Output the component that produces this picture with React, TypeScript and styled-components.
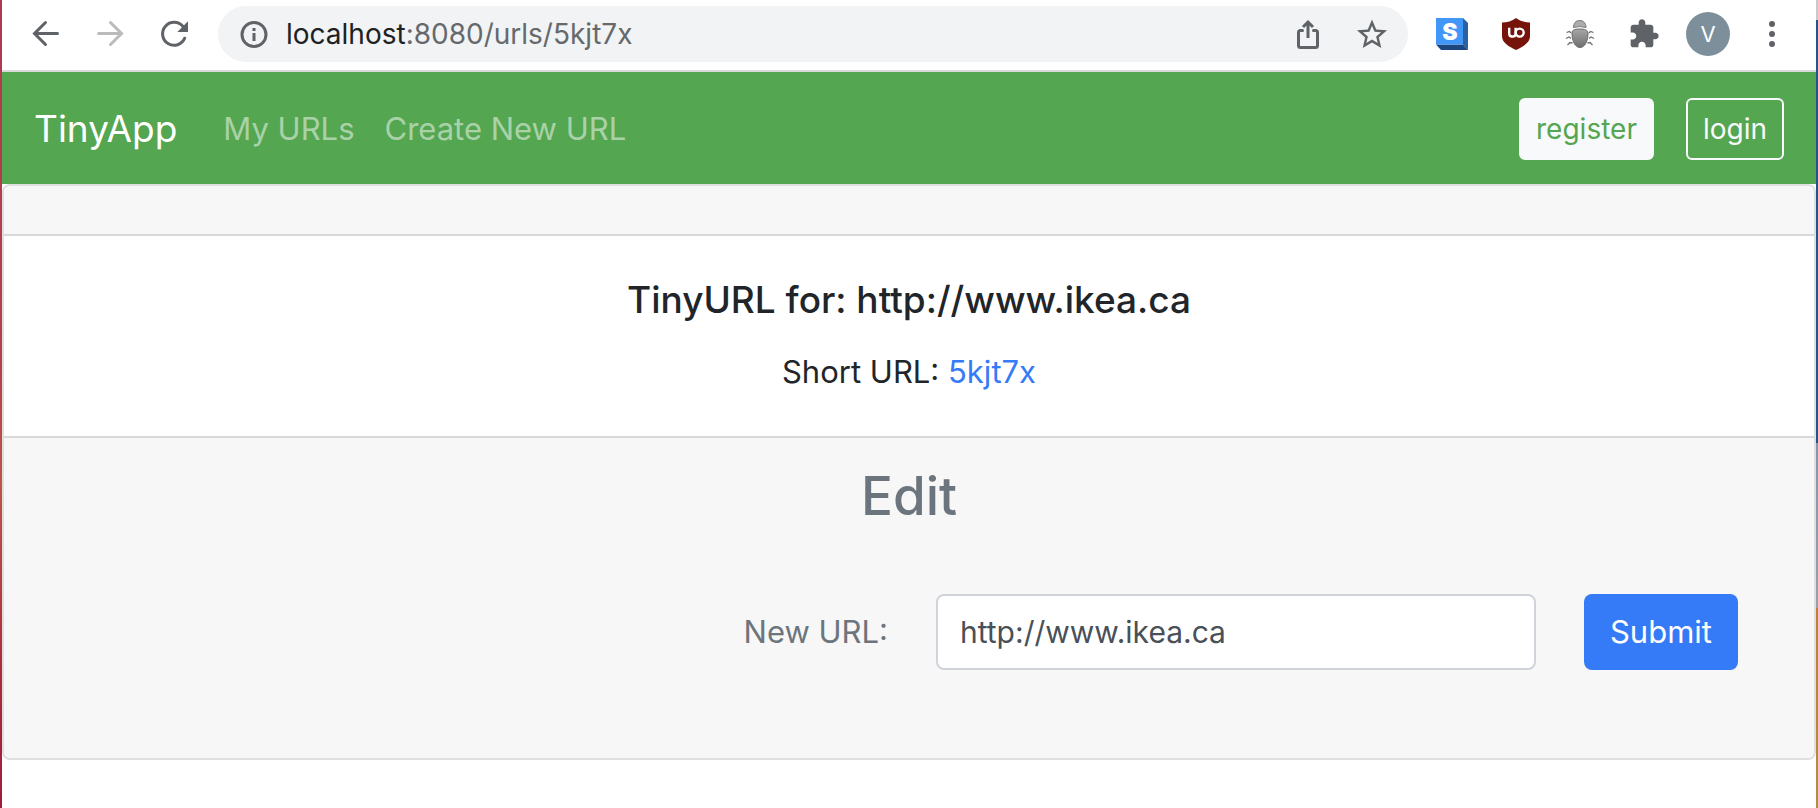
import React from 'react';
import styled, { createGlobalStyle } from 'styled-components';

const GlobalStyle = createGlobalStyle`
  *, *::before, *::after {
    box-sizing: border-box;
  }
  body {
    margin: 0;
    background: #ffffff;
    color: #212529;
    font-family: Inter, "Liberation Sans", sans-serif;
    font-size: 31px;
    line-height: 48px;
  }
`;

const Desktop = styled.div`
  display: grid;
  grid-template-columns: 2px minmax(0, 1fr) 2px;
  min-height: 100vh;
`;

const LeftEdge = styled.div`
  background: linear-gradient(#ad3a52, #b5404c 45%, #bd5548 60%, #b02c3c 82%, #a01c3c);
`;

const RightEdge = styled.div`
  background: linear-gradient(
    #c9c9cb 0 20px,
    #275487 20px 443px,
    #8496ae 443px,
    #9aa0a6 608px,
    #b9803f 608px,
    #b38c45 100%
  );
`;

const Window = styled.div`
  background: #ffffff;
`;

/* Browser toolbar */

const Toolbar = styled.header`
  display: flex;
  align-items: center;
  gap: 28px;
  padding: 6px 28px 8px;
  border-bottom: 2px solid #dadadd;
`;

const IconGroup = styled.div`
  display: flex;
  align-items: center;
  gap: 32px;
`;

const IconButton = styled.button<{ $faded?: boolean }>`
  display: block;
  width: 32px;
  height: 32px;
  padding: 0;
  border: 0;
  background: none;
  color: ${(p) => (p.$faded ? '#babbbd' : '#5f6368')};

  svg {
    display: block;
    width: 32px;
    height: 32px;
  }
`;

const AddressBar = styled.div`
  display: flex;
  flex: 1;
  align-items: center;
  gap: 32px;
  height: 56px;
  padding: 0 20px;
  border-radius: 28px;
  background: #f1f3f4;
`;

const Address = styled.div`
  display: flex;
  flex: 1;
  align-items: center;
  gap: 16px;
  color: #66696c;
  font-size: 28px;
`;

const Host = styled.span`
  color: #202124;
`;

const ProfileButton = styled.button`
  width: 44px;
  height: 44px;
  margin: 0 -6px;
  padding: 0;
  border: 0;
  border-radius: 50%;
  background: #7c8f9b;
  color: #ffffff;
  font: 400 22px/44px Inter, "Liberation Sans", sans-serif;
`;

/* Page */

const Navbar = styled.nav`
  display: flex;
  align-items: center;
  justify-content: space-between;
  padding: 26px 32px 24px;
  background: #54a651;
`;

const NavLinks = styled.div`
  display: flex;
  align-items: center;
  gap: 30px;
`;

const NavActions = styled.div`
  display: flex;
  align-items: center;
  gap: 32px;
`;

const Brand = styled.a`
  margin-right: 16px;
  color: #ffffff;
  font-size: 37px;
  text-decoration: none;
`;

const NavLink = styled.a`
  color: rgba(255, 255, 255, 0.5);
  text-decoration: none;
`;

const NavButton = styled.a<{ $filled?: boolean }>`
  padding: 8px 15px;
  border: 2px solid #f8f9fa;
  border-radius: 6px;
  background: ${(p) => (p.$filled ? '#f8f9fa' : 'transparent')};
  color: ${(p) => (p.$filled ? '#54a651' : '#f8f9fa')};
  font-size: 28px;
  line-height: 42px;
  text-decoration: none;
`;

const Card = styled.main`
  border: 2px solid #dfdfdf;
  border-radius: 8px;
  background: #ffffff;
  text-align: center;
`;

const CardHeader = styled.div`
  height: 50px;
  border-bottom: 2px solid #d8d8d8;
  border-radius: 6px 6px 0 0;
  background: #f7f7f7;
`;

const CardBody = styled.section`
  padding: 40px;
`;

const Title = styled.h1`
  margin: 0 0 24px;
  font-size: 37px;
  font-weight: 500;
  line-height: 48px;
`;

const Text = styled.p`
  margin: 0;
`;

const TextLink = styled.a`
  color: #357af6;
  text-decoration: none;
`;

const CardFooter = styled.section`
  padding: 24px 76px 88px;
  border-top: 2px solid #d8d8d8;
  border-radius: 0 0 6px 6px;
  background: #f7f7f7;
  color: #6c757d;
`;

const FooterTitle = styled.h2`
  margin: 0 0 64px;
  font-size: 53px;
  font-weight: 500;
  line-height: 68px;
`;

const EditForm = styled.form`
  display: flex;
  align-items: center;
  justify-content: flex-end;
  gap: 48px;
`;

const UrlInput = styled.input`
  flex: 0 1 600px;
  min-width: 0;
  height: 76px;
  padding: 0 22px;
  border: 2px solid #ced4da;
  border-radius: 8px;
  background: #ffffff;
  color: #495057;
  font: 400 30px/48px Inter, "Liberation Sans", sans-serif;
`;

const SubmitButton = styled.button`
  height: 76px;
  padding: 0 26px;
  border: 0;
  border-radius: 8px;
  background: #357af6;
  color: #ffffff;
  font: 400 31px/48px Inter, "Liberation Sans", sans-serif;
`;

/* Icons */

const line = {
  fill: 'none',
  stroke: 'currentColor',
  strokeWidth: 3,
  strokeLinecap: 'round' as const,
};

const BackIcon = () => (
  <svg viewBox="0 0 32 32" aria-hidden="true">
    <path d="M27.5 15.5H5M15.5 4.5L4.5 15.5L15.5 26.5" {...line} />
  </svg>
);

const ForwardIcon = () => (
  <svg viewBox="0 0 32 32" aria-hidden="true">
    <path d="M4.500 15.500H27M16.500 4.500L27.500 15.500L16.500 26.500" {...line} />
  </svg>
);

const ReloadIcon = () => (
  <svg viewBox="0 0 32 32" aria-hidden="true">
    <path d="M26.700 20.200A11.500 11.500 0 1 1 25 8.500" {...line} />
    <path d="M30 3.300V14H19.300z" fill="currentColor" />
  </svg>
);

const InfoIcon = () => (
  <svg viewBox="0 0 32 32" width="32" height="32" aria-hidden="true">
    <circle cx="16" cy="16.500" r="12" fill="none" stroke="#5f6368" strokeWidth="3" />
    <path d="M14.500 10H17.500V13H14.500zM14.500 15H17.500V23H14.500z" fill="#5f6368" />
  </svg>
);

const ShareIcon = () => (
  <svg viewBox="0 0 32 32" aria-hidden="true">
    <path d="M10.500 12.500H8.500Q6.500 12.500 6.500 14.500V27.500Q6.500 29.500 8.500 29.500H23.500Q25.500 29.500 25.500 27.500V14.500Q25.500 12.500 23.500 12.500H21.500" {...line} />
    <path d="M16 20V4.500M11 9L16 4L21 9" {...line} strokeLinecap="butt" />
  </svg>
);

const StarIcon = () => (
  <svg viewBox="1.33 1 21.33 21.33" aria-hidden="true">
    <path
      fill="currentColor"
      d="M22 9.240l-7.190-.620L12 2 9.190 8.630 2 9.240l5.460 4.730L5.820 21 12 17.270 18.180 21l-1.630-7.030L22 9.240zM12 15.400l-3.760 2.270 1-4.280-3.320-2.880 4.380-.380L12 6.100l1.710 4.040 4.380.380-3.320 2.880 1 4.280L12 15.400z"
    />
  </svg>
);

const StylusIcon = () => (
  <svg viewBox="0 0 32 32" aria-hidden="true">
    <path d="M27 0L32 5V32L27 26.500z" fill="#2862a3" />
    <path d="M0 26.500L5 32H32L27 26.500z" fill="#1c4680" />
    <path d="M0 0H27V26.500H0z" fill="#4296f8" />
    <text x="14" y="21.500" textAnchor="middle" fill="#ffffff" fontFamily="Inter, sans-serif" fontWeight="900" fontSize="23">
      S
    </text>
  </svg>
);

const ShieldIcon = () => (
  <svg viewBox="0 0 32 32" aria-hidden="true">
    <path
      d="M16 0C12 3 7 4.500 2 4.500V18C2 25 9 28.500 16 32C23 28.500 30 25 30 18V4.500C25 4.500 20 3 16 0z"
      fill="#76140c"
    />
    <path d="M9.200 9.800V15.500Q9.200 18.500 12 18.500H13Q15.600 18.500 15.600 15.500V9.800" fill="none" stroke="#ffffff" strokeWidth="2.400" />
    <circle cx="19.700" cy="14.600" r="4" fill="none" stroke="#ffffff" strokeWidth="2.400" />
  </svg>
);

const BugIcon = () => (
  <svg viewBox="0 0 32 32" aria-hidden="true">
    <defs>
      <linearGradient id="bug" x1="0" y1="0" x2="0" y2="1">
        <stop offset="0" stopColor="#a6a6a6" />
        <stop offset="1" stopColor="#6e6e6e" />
      </linearGradient>
    </defs>
    <path d="M9.500 9.500C9.500 5 12 2.500 15.700 2.500C19.500 2.500 22 5 22 9.500Q15.700 7.500 9.500 9.500z" fill="#acacac" stroke="#777777" />
    <path
      d="M8 15C8 12 11 11 15.700 11C20.500 11 24 12 24 15C24 23 21 29.500 16 29.500C11 29.500 8 23 8 15z"
      fill="url(#bug)"
      stroke="#696969"
    />
    <path
      d="M7 15L5.500 13.500L2.500 14.500M7 20.500L5 19L2 20.500M8.500 25L6 24.500L3.500 27M25 15L26.500 13.500L29.500 14.500M25 20.500L27 19L30 20.500M23.500 25L26 24.500L28.500 27"
      fill="none"
      stroke="#707070"
      strokeWidth="1.300"
    />
  </svg>
);

const PuzzleIcon = () => (
  <svg viewBox="0 0 24 24" aria-hidden="true">
    <path
      fill="currentColor"
      d="M20.500 11H19V7c0-1.100-.900-2-2-2h-4V3.500C13 2.120 11.880 1 10.500 1S8 2.120 8 3.500V5H4c-1.100 0-1.990.900-1.990 2v3.800H3.500c1.490 0 2.700 1.210 2.700 2.700s-1.210 2.700-2.700 2.700H2V20c0 1.100.900 2 2 2h3.800v-1.500c0-1.490 1.210-2.700 2.700-2.700 1.490 0 2.700 1.210 2.700 2.700V22H17c1.100 0 2-.900 2-2v-4h1.500c1.380 0 2.500-1.120 2.500-2.500S21.880 11 20.500 11z"
    />
  </svg>
);

const MenuIcon = () => (
  <svg viewBox="0 0 32 32" aria-hidden="true" fill="currentColor">
    <circle cx="16" cy="6" r="3" />
    <circle cx="16" cy="16" r="3" />
    <circle cx="16" cy="26" r="3" />
  </svg>
);

export default function App() {
  return (
    <>
      <GlobalStyle />
      <Desktop>
        <LeftEdge />
        <Window>
          <Toolbar>
            <IconGroup>
              <IconButton aria-label="Back"><BackIcon /></IconButton>
              <IconButton aria-label="Forward" $faded><ForwardIcon /></IconButton>
              <IconButton aria-label="Reload"><ReloadIcon /></IconButton>
            </IconGroup>
            <AddressBar>
              <Address>
                <InfoIcon />
                <span><Host>localhost</Host>:8080/urls/5kjt7x</span>
              </Address>
              <IconButton aria-label="Share"><ShareIcon /></IconButton>
              <IconButton aria-label="Bookmark"><StarIcon /></IconButton>
            </AddressBar>
            <IconGroup>
              <IconButton aria-label="Stylus"><StylusIcon /></IconButton>
              <IconButton aria-label="uBlock Origin"><ShieldIcon /></IconButton>
              <IconButton aria-label="Debugger"><BugIcon /></IconButton>
              <IconButton aria-label="Extensions"><PuzzleIcon /></IconButton>
              <ProfileButton>V</ProfileButton>
              <IconButton aria-label="Menu"><MenuIcon /></IconButton>
            </IconGroup>
          </Toolbar>

          <Navbar>
            <NavLinks>
              <Brand href="#">TinyApp</Brand>
              <NavLink href="#urls">My URLs</NavLink>
              <NavLink href="#new">Create New URL</NavLink>
            </NavLinks>
            <NavActions>
              <NavButton href="#register" $filled>register</NavButton>
              <NavButton href="#login">login</NavButton>
            </NavActions>
          </Navbar>

          <Card>
            <CardHeader />
            <CardBody>
              <Title>TinyURL for: http://www.ikea.ca</Title>
              <Text>
                Short URL: <TextLink href="#5kjt7x">5kjt7x</TextLink>
              </Text>
            </CardBody>
            <CardFooter>
              <FooterTitle>Edit</FooterTitle>
              <EditForm onSubmit={(e) => e.preventDefault()}>
                <label htmlFor="longURL">New URL:</label>
                <UrlInput id="longURL" type="text" defaultValue="http://www.ikea.ca" />
                <SubmitButton type="submit">Submit</SubmitButton>
              </EditForm>
            </CardFooter>
          </Card>
        </Window>
        <RightEdge />
      </Desktop>
    </>
  );
}
